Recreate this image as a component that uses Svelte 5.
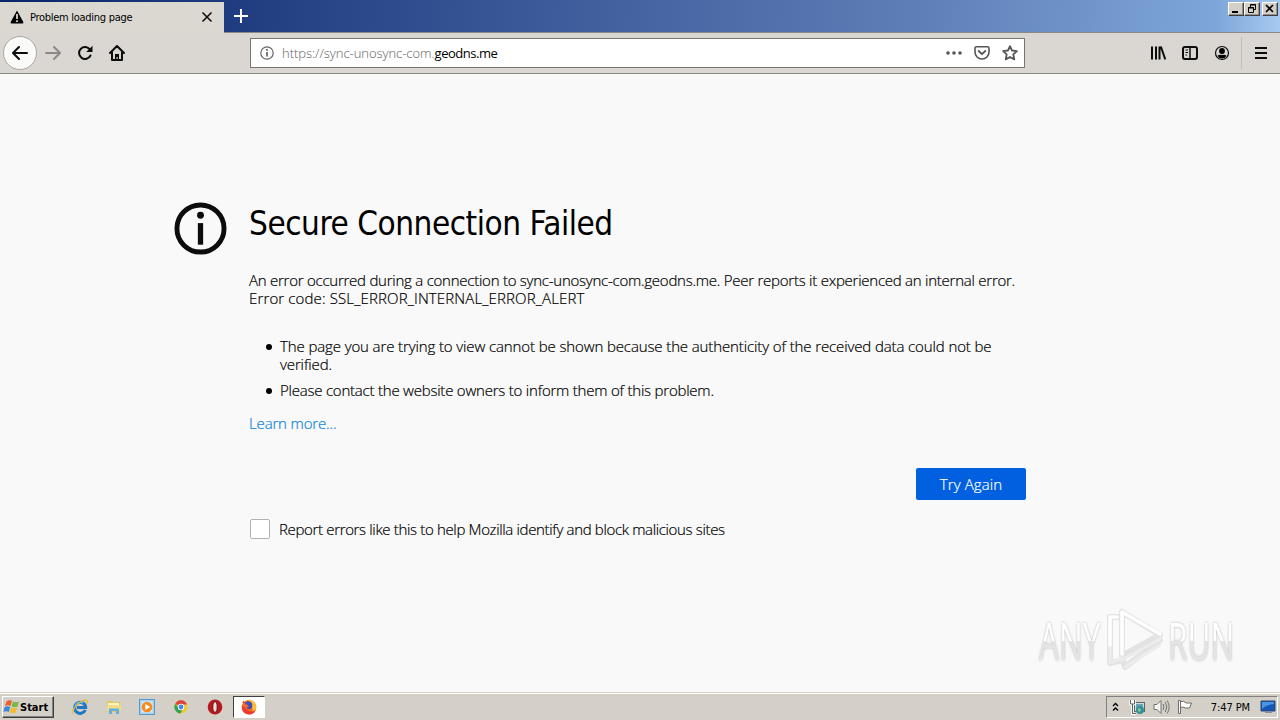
<script>
  let address = 'geodns.me';
  let subdomain = 'https://sync-unosync-com.';
  let reportErrors = false;

  const reasons = [
    ['The page you are trying to view cannot be shown because the authenticity of the received data could not be', 'verified.'],
    ['Please contact the website owners to inform them of this problem.']
  ];
</script>

<div class="screen">
  <header class="titlebar">
    <div class="tab">
      <svg class="warn" width="14" height="14" viewBox="0 0 14 14">
        <path d="M7 .5 13.3 12q.5 1.500-1 1.500H1.700Q.2 13.500.7 12Z" />
        <path d="M7 4v5M7 10.300v1.800" stroke="#dbd8d1" stroke-width="1.800" />
      </svg>
      <span class="tab-title">Problem loading page</span>
      <svg width="12" height="12" viewBox="0 0 12 12" fill="none" stroke="#111" stroke-width="1.600">
        <path d="m1.500 1.500 9 9m0-9-9 9" />
      </svg>
    </div>
    <svg class="plus" width="14" height="14" viewBox="0 0 14 14" stroke="#fff" stroke-width="2">
      <path d="M7 0v14M0 7h14" />
    </svg>
    <div class="window-buttons">
      <button aria-label="Minimize">
        <svg width="14" height="12" viewBox="0 0 14 12"><path d="M3 8h6v2H3z" /></svg>
      </button>
      <button aria-label="Restore">
        <svg width="14" height="12" viewBox="0 0 14 12" fill="none" stroke="#000">
          <path d="M5.500 4V1.500h5v5H9M5 2h6M3.500 4.500h5v5h-5zM3 5h6" />
        </svg>
      </button>
      <button class="close" aria-label="Close">
        <svg width="14" height="12" viewBox="0 0 14 12" stroke="#000" stroke-width="1.700"><path d="m3 2 7 7m0-7-7 7" /></svg>
      </button>
    </div>
  </header>

  <nav class="toolbar">
    <span class="back">
      <svg width="16" height="16" viewBox="0 0 16 16" fill="none" stroke="#0c0c0d" stroke-width="2" stroke-linecap="round" stroke-linejoin="round">
        <path d="M15 8H1.500M7 2 1 8l6 6" />
      </svg>
    </span>
    <svg class="forward" width="16" height="16" viewBox="0 0 16 16" fill="none" stroke="#8b8985" stroke-width="2" stroke-linecap="round" stroke-linejoin="round">
      <path d="M1 8h13.500M9 2l6 6-6 6" />
    </svg>
    <svg class="reload" width="16" height="16" viewBox="0 0 16 16" fill="none" stroke="#0c0c0d" stroke-width="2" stroke-linecap="round">
      <path d="M13.500 10.500A6 6 0 1 1 13 4.500" />
      <path d="M15.500 .8V7H9.200Z" fill="#0c0c0d" stroke="none" />
    </svg>
    <svg class="home" width="16" height="16" viewBox="0 0 16 16" fill="none" stroke="#0c0c0d" stroke-width="2" stroke-linejoin="round" stroke-linecap="round">
      <path d="m1 8 7-7 7 7M3 7.500V15h10V7.500" />
      <path d="M6 14.500V9h4v5.500H8.700V12H7.500v2.500Z" fill="#0c0c0d" stroke="none" />
    </svg>

    <div class="urlbar">
      <svg width="14" height="14" viewBox="0 0 14 14" fill="none" stroke="#656565" stroke-width="1.200">
        <circle cx="7" cy="7" r="6.200" />
        <path d="M7 6v4.500M7 3v1.700" stroke-width="1.700" />
      </svg>
      <span class="url"><span class="dim">{subdomain}</span>{address}</span>
      <svg class="dots" width="16" height="16" viewBox="0 0 16 16" fill="#555">
        <circle cx="2" cy="8" r="1.800" /><circle cx="8" cy="8" r="1.800" /><circle cx="14" cy="8" r="1.800" />
      </svg>
      <svg class="pocket" width="16" height="16" viewBox="0 0 16 16" fill="none" stroke="#555" stroke-width="1.800" stroke-linecap="round" stroke-linejoin="round">
        <path d="M2.500 1.800h11Q15 1.800 15 3.300V7A7 7 0 0 1 1 7V3.300q0-1.500 1.500-1.500Z" stroke-width="1.600" />
        <path d="m4.700 6 3.300 3.200L11.300 6" />
      </svg>
      <svg class="star" width="16" height="16" viewBox="0 0 16 16" fill="none" stroke="#555" stroke-width="1.800" stroke-linejoin="round">
        <path d="m8 1.200 2 4.300 4.900.6-3.600 3.300 1 5L8 12l-4.300 2.400 1-5L1.100 6.100 6 5.500Z" />
      </svg>
    </div>

    <svg class="library" width="16" height="16" viewBox="0 0 16 16" stroke="#0c0c0d">
      <path d="M2 1.500v13M6 1.500v13M9.500 1.500v13M10.800 1.500l4.500 13" stroke-width="2" />
    </svg>
    <svg class="sidebar" width="16" height="16" viewBox="0 0 16 16" fill="none" stroke="#0c0c0d">
      <rect x="1" y="2" width="14" height="12" rx="2" stroke-width="2" />
      <path d="M8 2v12" stroke-width="1.500" />
      <path d="M3.500 5h2.500M3.500 7.500h2.500M3.500 10h1.500" />
    </svg>
    <svg class="account" width="16" height="16" viewBox="0 0 16 16">
      <circle cx="8" cy="8" r="6.500" fill="none" stroke="#0c0c0d" stroke-width="1.200" />
      <circle cx="8" cy="6" r="2.900" />
      <path d="M3.400 10.700q2-1.700 4.600-.7 2.600-1 4.600.7Q11 13.500 8 13.500t-4.600-2.800Z" />
    </svg>
    <span class="divider"></span>
    <svg class="menu" width="14" height="14" viewBox="0 0 14 14" stroke="#0c0c0d" stroke-width="2">
      <path d="M1 2h12M1 7h12M1 12h12" />
    </svg>
  </nav>

  <main>
    <svg class="info" width="54" height="54" viewBox="0 0 54 54">
      <circle cx="27" cy="27" r="24" fill="none" stroke="#0c0c0d" stroke-width="5" />
      <circle cx="27" cy="13.500" r="3.500" fill="#0c0c0d" />
      <path d="M24.300 21.500h5.400V43.500h-5.400z" fill="#0c0c0d" />
    </svg>
    <section class="error">
      <h1>Secure Connection Failed</h1>
      <p class="detail">
        <span class="message">An error occurred during a connection to sync-unosync-com.geodns.me. Peer reports it experienced an internal error.</span><br />
        <span class="code">Error code: SSL_ERROR_INTERNAL_ERROR_ALERT</span>
      </p>
      <ul>
        {#each reasons as lines}
          <li>
            {#each lines as line}<div>{line}</div>{/each}
          </li>
        {/each}
      </ul>
      <a class="learn" href="#learn">Learn more...</a>
      <button class="retry">Try Again</button>
      <label class="report">
        <input type="checkbox" bind:checked={reportErrors} />
        <span>Report errors like this to help Mozilla identify and block malicious sites</span>
      </label>
    </section>

    <div class="watermark">
      <span>ANY</span>
      <svg width="60" height="64" viewBox="0 0 60 64" fill="none" stroke-linejoin="round" stroke-linecap="round">
        <path d="M17 4v44l38-21ZM12 9H5v46l9-2M55 32 20 59l-2-6" stroke="#e3e3e3" stroke-width="6" />
        <path d="M17 52 55 31M20 59l35-22M5 36v19l12-5" stroke="#ececec" stroke-width="3" />
        <path d="M17 46V4l38 22M12 9H5v28" stroke="#fff" stroke-width="3.500" />
      </svg>
      <span>RUN</span>
    </div>
  </main>

  <footer class="taskbar">
    <button class="start">
      <svg width="17" height="16" viewBox="0 0 17 16">
        <path d="M3.500 2.500Q6 .5 9 2L7.500 7Q5 5.500 2 7Z" fill="#e8612c" />
        <path d="M10 2.500q3 1.500 6 0l-1.500 5q-3 1.500-6 0Z" fill="#75b843" />
        <path d="M1.700 8Q4.500 6.500 7.200 8l-1.400 5Q3 11.500.3 13Z" fill="#3d86d7" />
        <path d="M8.200 8.500q3 1.500 6 0l-1.500 5q-3 1.500-6 0Z" fill="#f3bd2f" />
      </svg>
      <span>Start</span>
    </button>

    <div class="launchers">
      <svg width="16" height="16" viewBox="0 0 16 16" fill="none">
        <path d="M13.300 11A5.500 5.500 0 1 1 13.700 8.500H5" stroke="#1f78c4" stroke-width="3" />
        <path d="M3 7.500A5.500 5.500 0 0 1 11 4" stroke="#5cc0ee" stroke-width="1.500" />
        <path d="M1.500 14.500C-2 12 8 1 14 1.200q2 .2.500 3.500" stroke="#e5b83a" stroke-width="1.300" />
      </svg>
      <svg width="16" height="16" viewBox="0 0 16 16">
        <path d="M1 2h5l1 1h7v10H1z" fill="#e3c765" />
        <path d="M2 4h11v4H2z" fill="#fff5bd" />
        <path d="M1 6h14v6H1z" fill="#f1db8b" />
        <path d="M3 9.500h10V15h-3v-3H6v3H3z" fill="#63b1dc" />
      </svg>
      <svg width="16" height="16" viewBox="0 0 16 16">
        <rect x=".5" y=".5" width="15" height="15" fill="#a9d2ef" stroke="#559bce" />
        <rect x="2.500" y="2.500" width="11" height="11" fill="#d6e9f5" />
        <circle cx="8" cy="8" r="5.300" fill="#f68b1f" />
        <path d="m6.300 5 5 3-5 3z" fill="#fff" />
      </svg>
      <svg width="16" height="16" viewBox="0 0 16 16">
        <circle cx="8" cy="8" r="6.500" fill="#f3c82d" />
        <path d="M8 8 2.200 4.700A6.500 6.500 0 0 1 14 5.500L8 5.500Z" fill="#dc4437" />
        <path d="M2.200 4.700A6.500 6.500 0 0 0 7.500 14.500L10 9.500 6 9.500Z" fill="#35a153" />
        <circle cx="8" cy="8" r="3.200" fill="#fff" />
        <circle cx="8" cy="8" r="2.400" fill="#4586ec" />
      </svg>
      <svg width="16" height="16" viewBox="0 0 16 16">
        <ellipse cx="8" cy="8" rx="7.300" ry="7.600" fill="#b51921" />
        <ellipse cx="8" cy="8" rx="2.200" ry="5.300" fill="#e6e1dc" stroke="#7e0b10" />
      </svg>
    </div>

    <div class="active-task">
      <svg width="16" height="16" viewBox="0 0 16 16">
        <circle cx="8" cy="8.300" r="7.300" fill="#f36b24" />
        <path d="M7 .8q6-.3 8 5.200 1 6-4 9 2-5-1-8T7 .8Z" fill="#ffbd32" />
        <path d="M1 4 2.700 1.500 4.500 4l3.300.2Z" fill="#ef4936" />
        <path d="M5 3q4-2 6 1.500 1 4-1.500 5.500-3 .5-4-1.500l2.500-1-2-2-2-.5Z" fill="#3b4dbb" />
        <path d="M.8 7Q1 15 8 15.600q5 0 6.500-4.600Q10 14 6 11 3 7 .8 7Z" fill="#ef3934" />
      </svg>
    </div>

    <div class="tray">
      <svg class="chevrons" width="7" height="10" viewBox="0 0 7 10" fill="none" stroke="#000" stroke-width="1.300">
        <path d="m1 4 2.500-2.500L6 4M1 8.500 3.500 6 6 8.500" />
      </svg>
      <svg class="network" width="16" height="16" viewBox="0 0 16 16">
        <rect x="5.500" y="3.500" width="10" height="9" fill="#cbdfe2" stroke="#52676c" />
        <path d="M7 5h7v6H7z" fill="#66a5ae" />
        <circle cx="11" cy="11" r="4" fill="#368f9c" />
        <path d="m9 9 3 1-1 3-2-1z" fill="#86ca7d" />
        <path d="M1.500 1v4h4V1M3.500 1v14H7" fill="none" stroke="#fff" stroke-width="2.600" />
        <path d="M1.500 1v4h4V1M3.500 5v9.500H7" fill="none" stroke="#59605d" />
      </svg>
      <svg width="17" height="16" viewBox="0 0 17 16" fill="#f4f4f4" stroke="#74736f">
        <path d="M1 5.500h3l4-4v13l-4-4H1z" />
        <path d="M10 5q2 3 0 6M12.300 3q3 5 0 10M14.200 1.500q4 6.500 0 13" fill="none" />
      </svg>
      <svg width="16" height="16" viewBox="0 0 16 16" fill="#fff" stroke="#6d6c69">
        <path d="M1.500 1.500h2v13h-2zM3.500 2.500q3-1 6 1.500h5l-2 5h-4q-2-1.500-5-.5Z" />
      </svg>
      <time>7:47 PM</time>
      <svg class="desktop" width="16" height="14" viewBox="0 0 16 14">
        <path d="M1 1h14v10H1z" fill="#1657b5" stroke="#2b4772" />
        <path d="M2 2h12v2Q6 5 2 9z" fill="#4996df" />
        <path d="M5 12h7v1H5z" fill="#83939d" />
      </svg>
    </div>
  </footer>
</div>

<style>
  :global(body) {
    margin: 0;
    overflow: hidden;
  }

  .screen {
    width: 1280px;
    height: 720px;
    display: flex;
    flex-direction: column;
    background: #f9f9f9;
    color: #000;
    font-family: "Open Sans", "Noto Sans", sans-serif;
  }

  svg {
    display: block;
    flex: none;
  }

  button {
    font: inherit;
    padding: 0;
  }

  .titlebar {
    box-sizing: border-box;
    height: 33px;
    display: flex;
    background: linear-gradient(92deg, #0a246a, #1f3c80 18%, #5f7fb8 72%, #7ea6d9 95%, #a6caf0);
    border-bottom: 1px solid #8a8a8a;
  }

  .tab {
    box-sizing: border-box;
    width: 224px;
    height: 31px;
    margin-top: 2px;
    padding: 0 11px 1px 10px;
    display: flex;
    align-items: center;
    background: #dbd8d1;
  }

  .tab-title {
    flex: 1;
    margin-left: 6px;
    font: 11px "DejaVu Sans Condensed", sans-serif;
    letter-spacing: -0.28px;
    white-space: nowrap;
  }

  .plus {
    margin: 9px 0 0 10px;
  }

  .window-buttons {
    display: flex;
    margin: 2px 2px 0 auto;
  }

  .window-buttons button {
    box-sizing: border-box;
    width: 16px;
    height: 14px;
    background: #d4d0c8;
    border: 1px solid;
    border-color: #fff #404040 #404040 #fff;
    box-shadow: inset -1px -1px #909090;
  }

  .window-buttons .close {
    margin-left: 2px;
  }

  .toolbar {
    box-sizing: border-box;
    height: 41px;
    display: flex;
    align-items: center;
    padding: 0 12px 1px 3px;
    background: #dad6d1;
    border-bottom: 1px solid #898884;
  }

  .back {
    box-sizing: border-box;
    width: 34px;
    height: 34px;
    display: grid;
    place-items: center;
    background: #fafaf9;
    border: 1px solid #aaa8a2;
    border-radius: 50%;
  }

  .forward {
    margin-left: 8px;
  }

  .reload,
  .home {
    margin-left: 16px;
  }

  .urlbar {
    box-sizing: border-box;
    width: 775px;
    height: 30px;
    margin-left: 125px;
    padding: 0 6px 0 9px;
    display: flex;
    align-items: center;
    background: #fff;
    border: 1px solid #77756f;
  }

  .url {
    flex: 1;
    margin-left: 8px;
    font-size: 13px;
    letter-spacing: -0.48px;
    white-space: nowrap;
  }

  .dim {
    color: #606060;
    font-weight: 300;
    letter-spacing: -0.04px;
  }

  .pocket,
  .star {
    margin-left: 12px;
  }

  .library {
    margin-left: auto;
  }

  .sidebar,
  .account {
    margin-left: 16px;
  }

  .divider {
    height: 32px;
    margin: 0 12px 0 11px;
    border-left: 1px solid #c2bfb9;
  }

  main {
    position: relative;
    flex: 1;
    display: flex;
    align-items: flex-start;
    padding-left: 174px;
  }

  .info {
    width: 53px;
    height: 53px;
    margin-top: 128px;
  }

  .error {
    width: 777px;
    margin: 128px 0 0 22px;
    display: flex;
    flex-direction: column;
    font-size: 15px;
    font-weight: 300;
    line-height: 18px;
    white-space: nowrap;
    -webkit-text-stroke: 0.2px;
  }

  h1 {
    height: 44px;
    margin: 0;
    font: 33px/44px "DejaVu Sans Condensed", sans-serif;
    letter-spacing: -0.46px;
    -webkit-text-stroke: 0;
  }

  .detail {
    margin: 25px 0 0;
  }

  .message {
    letter-spacing: -0.245px;
  }

  .code {
    letter-spacing: 0.14px;
  }

  ul {
    margin: 30px 0 0;
    padding-left: 31px;
    list-style: none;
  }

  li {
    position: relative;
    margin-bottom: 8px;
    letter-spacing: -0.115px;
  }

  li::before {
    content: "";
    position: absolute;
    left: -14px;
    top: 7px;
    width: 6px;
    height: 6px;
    border-radius: 50%;
    background: #000;
  }

  li:last-child {
    letter-spacing: -0.22px;
  }

  .learn {
    margin-top: 7px;
    color: #0a84d8;
    letter-spacing: -0.15px;
    text-decoration: none;
  }

  .retry {
    align-self: flex-end;
    width: 110px;
    height: 32px;
    margin-top: 36px;
    border: 0;
    border-radius: 2px;
    background: #0060df;
    color: #fff;
    letter-spacing: 0.1px;
  }

  .report {
    display: flex;
    align-items: center;
    gap: 9px;
    margin: 19px 0 0 1px;
    letter-spacing: -0.34px;
  }

  .report input {
    appearance: none;
    box-sizing: border-box;
    width: 20px;
    height: 20px;
    margin: 0;
    background: #fff;
    border: 1px solid #b1b1b1;
    border-radius: 2px;
  }

  .watermark {
    position: absolute;
    left: 1039px;
    bottom: 20px;
    display: flex;
    align-items: center;
    gap: 3px;
    font: 400 51px/64px "Open Sans", sans-serif;
  }

  .watermark span {
    width: 63px;
    margin-right: -40px;
    padding-right: 40px;
    white-space: nowrap;
    transform: scaleX(0.62);
    transform-origin: left;
    color: transparent;
    background: linear-gradient(#fff 52%, #e4e4e4 52%);
    background-clip: text;
    -webkit-background-clip: text;
    filter: drop-shadow(0 0 1.500px #bbb);
  }

  .taskbar {
    box-sizing: border-box;
    height: 28px;
    display: flex;
    align-items: center;
    padding: 1px 2px 0;
    background: #d4d0c8;
    border-top: 1px solid #d4d0c8;
    box-shadow: inset 0 1px #fff;
  }

  .start {
    box-sizing: border-box;
    width: 52px;
    height: 22px;
    display: flex;
    align-items: center;
    background: #d4d0c8;
    border: 1px solid;
    border-color: #fff #404040 #404040 #fff;
    box-shadow: inset -1px -1px #808080;
    font: 700 11px "DejaVu Sans Condensed", sans-serif;
    color: #000;
  }

  .launchers {
    display: flex;
    gap: 17.700px;
    margin-left: 18px;
  }

  .active-task {
    box-sizing: border-box;
    width: 32px;
    height: 22px;
    display: grid;
    place-items: center;
    margin-left: 10px;
    background: #fff;
    border: 1px solid;
    border-color: #404040 #fff #fff #404040;
  }

  .tray {
    box-sizing: border-box;
    width: 172px;
    height: 22px;
    display: flex;
    align-items: center;
    gap: 7px;
    margin-left: auto;
    padding: 0 1px 0 5px;
    border: 1px solid;
    border-color: #808080 #fff #fff #808080;
  }

  .network {
    margin-left: 3px;
  }

  .network + svg {
    margin-left: 1px;
  }

  time {
    margin-left: auto;
    margin-right: 3px;
    font: 11px "DejaVu Sans Condensed", sans-serif;
    letter-spacing: -0.1px;
    color: #000;
    white-space: nowrap;
  }
</style>
